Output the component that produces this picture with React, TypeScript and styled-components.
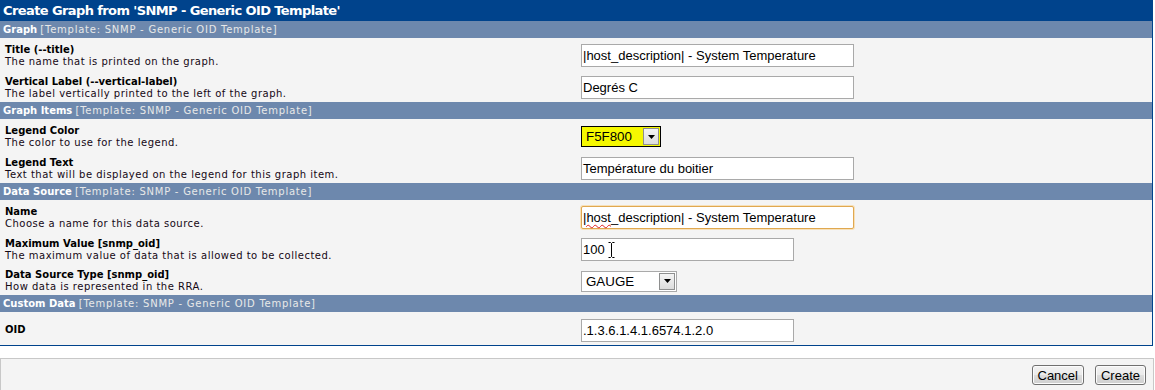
import React from 'react';
import styled, { createGlobalStyle } from 'styled-components';

const GlobalStyle = createGlobalStyle`
  html, body {
    margin: 0;
    padding: 0;
    background: #ffffff;
  }
  body {
    font-family: 'DejaVu Sans', Verdana, sans-serif;
    font-size: 10px;
    color: #000;
  }
`;

type Field = {
  label: string;
  desc?: string;
  kind: 'text' | 'select' | 'color';
  value: string;
  width?: number;
  height?: number;
  focused?: boolean;
  squiggle?: boolean;
  cursor?: boolean;
};

type Section = {
  title: string;
  fields: Field[];
};

const sections: Section[] = [
  {
    title: 'Graph',
    fields: [
      { label: 'Title (--title)', desc: 'The name that is printed on the graph.', kind: 'text', value: '|host_description| - System Temperature', width: 273 },
      { label: 'Vertical Label (--vertical-label)', desc: 'The label vertically printed to the left of the graph.', kind: 'text', value: 'Degrés C', width: 273 },
    ],
  },
  {
    title: 'Graph Items',
    fields: [
      { label: 'Legend Color', desc: 'The color to use for the legend.', kind: 'color', value: 'F5F800', width: 80 },
      { label: 'Legend Text', desc: 'Text that will be displayed on the legend for this graph item.', kind: 'text', value: 'Température du boitier', width: 273 },
    ],
  },
  {
    title: 'Data Source',
    fields: [
      { label: 'Name', desc: 'Choose a name for this data source.', kind: 'text', value: '|host_description| - System Temperature', width: 273, focused: true, squiggle: true },
      { label: 'Maximum Value [snmp_oid]', desc: 'The maximum value of data that is allowed to be collected.', kind: 'text', value: '100', width: 213, cursor: true },
      { label: 'Data Source Type [snmp_oid]', desc: 'How data is represented in the RRA.', kind: 'select', value: 'GAUGE', width: 96, height: 31 },
    ],
  },
  {
    title: 'Custom Data',
    fields: [{ label: 'OID', kind: 'text', value: '.1.3.6.1.4.1.6574.1.2.0', width: 213, height: 33 }],
  },
];

const TEMPLATE = '[Template: SNMP - Generic OID Template]';

const IBeam = () => (
  <svg width="7" height="16" viewBox="0 0 7 16" style={{ marginLeft: 3 }}>
    <path d="M0.5 0.5 H2.5 L3.5 1.5 L4.5 0.5 H6.5 M3.5 1.5 V14.5 M0.5 15.5 H2.5 L3.5 14.5 L4.5 15.5 H6.5" stroke="#000" fill="none" strokeWidth="1" />
  </svg>
);

const TextValue = ({ field }: { field: Field }) => {
  if (field.squiggle) {
    const [first, ...rest] = field.value.split('_');
    return (
      <>
        <Squiggle>{first}</Squiggle>_{rest.join('_')}
      </>
    );
  }
  return <>{field.value}</>;
};

const FieldInput = ({ field }: { field: Field }) => {
  if (field.kind === 'text') {
    return (
      <TextBox $width={field.width ?? 273} $focused={field.focused}>
        <TextValue field={field} />
        {field.cursor && <IBeam />}
      </TextBox>
    );
  }
  return (
    <SelectBox $width={field.width ?? 96} $color={field.kind === 'color'}>
      <SelectText>{field.value}</SelectText>
      <ArrowButton>
        <svg width="7" height="4" viewBox="0 0 7 4">
          <path d="M0 0 H7 L3.5 4 Z" fill="#000" />
        </svg>
      </ArrowButton>
    </SelectBox>
  );
};

const App = () => {
  return (
    <Page>
      <GlobalStyle />
      <FormTable>
        <TitleBar>Create Graph from 'SNMP - Generic OID Template'</TitleBar>
        {sections.map((section) => (
          <React.Fragment key={section.title}>
            <SectionBar>
              <strong>{section.title}</strong> <span>{TEMPLATE}</span>
            </SectionBar>
            {section.fields.map((field) => (
              <FormRow key={field.label} $height={field.height ?? 32}>
                <LabelCell>
                  <FieldLabel>{field.label}</FieldLabel>
                  {field.desc && <FieldDesc>{field.desc}</FieldDesc>}
                </LabelCell>
                <InputCell>
                  <FieldInput field={field} />
                </InputCell>
              </FormRow>
            ))}
          </React.Fragment>
        ))}
      </FormTable>
      <ButtonBar>
        <Button>Cancel</Button>
        <Button>Create</Button>
      </ButtonBar>
    </Page>
  );
};

export default App;

const Page = styled.div`
  width: 1155px;
  height: 390px;
  overflow: hidden;
`;

const FormTable = styled.div`
  width: 1152px;
  border-right: 1px solid #00438c;
  border-bottom: 1px solid #00438c;
  background: #f4f4f4;
`;

const TitleBar = styled.div`
  height: 21px;
  line-height: 21px;
  background: #00438c;
  color: #fff;
  font-weight: bold;
  font-size: 13px;
  letter-spacing: -0.6px;
  padding-left: 3px;
  white-space: nowrap;
`;

const SectionBar = styled.div`
  height: 17px;
  line-height: 17px;
  background: #6d88ad;
  padding-left: 3px;
  font-size: 10px;
  white-space: nowrap;
  strong {
    color: #fff;
    font-weight: bold;
  }
  span {
    color: #e8e8e8;
    letter-spacing: 0.75px;
  }
`;

const FormRow = styled.div<{ $height: number }>`
  display: grid;
  grid-template-columns: 580px 1fr;
  align-items: center;
  height: ${(p) => p.$height}px;
  padding-top: 3px;
  box-sizing: border-box;
`;

const LabelCell = styled.div`
  padding-left: 5px;
  line-height: 12px;
  white-space: nowrap;
`;

const FieldLabel = styled.div`
  font-weight: bold;
  color: #000;
`;

const FieldDesc = styled.div`
  color: #140814;
  letter-spacing: 0.5px;
`;

const InputCell = styled.div`
  display: flex;
  align-items: center;
  padding-left: 1px;
`;

const TextBox = styled.div<{ $width: number; $focused?: boolean }>`
  display: flex;
  align-items: center;
  width: ${(p) => p.$width}px;
  height: 23px;
  box-sizing: border-box;
  padding: 0 1px;
  background: #fff;
  border: 1px solid ${(p) => (p.$focused ? '#e0a850' : '#a9a9a9')};
  border-radius: ${(p) => (p.$focused ? '2px' : '0')};
  box-shadow: ${(p) => (p.$focused ? '0 0 0 1px #f7e0b8' : 'none')};
  font-family: 'Liberation Sans', Arial, sans-serif;
  font-size: 13px;
  color: #000;
  white-space: nowrap;
`;

const Squiggle = styled.span`
  text-decoration: underline wavy #e02020;
  text-decoration-thickness: 1px;
  text-underline-offset: 2px;
`;

const SelectBox = styled.div<{ $width: number; $color?: boolean }>`
  display: flex;
  align-items: stretch;
  width: ${(p) => p.$width}px;
  height: 21px;
  box-sizing: border-box;
  border: 1px solid ${(p) => (p.$color ? '#000' : '#a9a9a9')};
  background: ${(p) => (p.$color ? '#f5f800' : '#fff')};
  font-family: 'Liberation Sans', Arial, sans-serif;
  font-size: 13.33px;
  color: #000;
`;

const SelectText = styled.div`
  flex: 1;
  display: flex;
  align-items: center;
  padding-left: 4px;
`;

const ArrowButton = styled.div`
  width: 16px;
  margin: 1px;
  display: flex;
  align-items: center;
  justify-content: center;
  box-sizing: border-box;
  border: 1px solid #8e8f8f;
  background: linear-gradient(#f4f4f4, #dcdcdc);
`;

const ButtonBar = styled.div`
  display: flex;
  justify-content: flex-end;
  align-items: flex-start;
  gap: 11px;
  margin-top: 12px;
  height: 40px;
  box-sizing: border-box;
  padding: 6px 7px 0;
  width: 1154px;
  background: #f4f4f4;
  border: 1px solid #c8c8c8;
`;

const Button = styled.button`
  height: 20px;
  padding: 0 5px;
  font-family: 'Liberation Sans', Arial, sans-serif;
  font-size: 13px;
  color: #000;
  border: 1px solid #707070;
  border-radius: 3px;
  background: linear-gradient(#f2f2f2 0%, #ebebeb 50%, #dddddd 51%, #cfcfcf 100%);
  box-shadow: inset 0 0 0 1px #fcfcfc;
`;
